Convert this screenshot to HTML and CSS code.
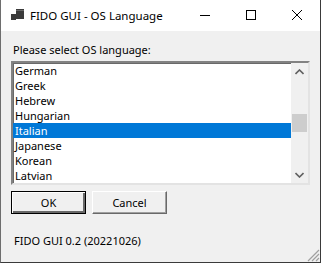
FILE: index.html
```html
<!DOCTYPE html>
<html>
<head>
    <title>FIDO GUI - OS Language</title>
    <link rel="stylesheet" href="styles.css">
</head>
<body>
    <div class="window">
        <div class="titlebar">
            <svg class="app-icon" width="13" height="13" viewBox="0 0 13 13">
                <rect x="0" y="5" width="5" height="6" fill="#3b3b3b"/>
                <rect x="5" y="0" width="8" height="10" fill="#3b3b3b"/>
                <rect x="5" y="1" width="8" height="1" fill="#6a6a6a"/>
            </svg>
            <span class="title">FIDO GUI - OS Language</span>
            <div class="controls">
                <svg class="ctl" width="46" height="30" viewBox="0 0 46 30"><rect x="18" y="15" width="10" height="1" fill="#000"/></svg>
                <svg class="ctl" width="46" height="30" viewBox="0 0 46 30"><rect x="18.5" y="10.5" width="9" height="9" fill="none" stroke="#000"/></svg>
                <svg class="ctl" width="46" height="30" viewBox="0 0 46 30"><path d="M18 10 L28 20 M28 10 L18 20" stroke="#000" stroke-width="1"/></svg>
            </div>
        </div>
        <div class="content">
            <div class="label">Please select OS language:</div>
            <div class="listbox">
                <ul class="items">
                    <li>German</li>
                    <li>Greek</li>
                    <li>Hebrew</li>
                    <li>Hungarian</li>
                    <li class="selected">Italian</li>
                    <li>Japanese</li>
                    <li>Korean</li>
                    <li>Latvian</li>
                </ul>
                <div class="scrollbar">
                    <div class="arrow">
                        <svg width="9" height="6" viewBox="0 0 9 6"><path d="M0.5 5 L4.5 1 L8.5 5" fill="none" stroke="#606060" stroke-width="1.6"/></svg>
                    </div>
                    <div class="track">
                        <div class="thumb"></div>
                    </div>
                    <div class="arrow">
                        <svg width="9" height="6" viewBox="0 0 9 6"><path d="M0.5 1 L4.5 5 L8.5 1" fill="none" stroke="#606060" stroke-width="1.6"/></svg>
                    </div>
                </div>
            </div>
            <div class="buttons">
                <div class="button default">OK</div>
                <div class="button">Cancel</div>
            </div>
            <div class="version">FIDO GUI 0.2 (20221026)</div>
        </div>
        <svg class="grip" width="13" height="13" viewBox="0 0 13 13">
            <path d="M12 1 L1 12 M12 5 L5 12 M12 9 L9 12" stroke="#a0a0a0" stroke-width="1.2"/>
        </svg>
    </div>
</body>
</html>
```

FILE: styles.css
```css
body { margin: 0; font-family: "Noto Sans", sans-serif; font-size: 11px; color: #000; }
.window { position: relative; width: 321px; height: 263px; box-sizing: border-box; background: #f0f0f0; border-left: 1px solid #6e6e6e; border-right: 1px solid #3a3a3a; border-bottom: 1px solid #3a3a3a; display: flex; flex-direction: column; overflow: hidden; }
.titlebar { height: 31px; background: #fff; display: flex; align-items: center; font-size: 11.5px; }
.app-icon { margin-left: 10px; margin-right: 6px; margin-top: -1px; }
.title { flex: 1; line-height: 16px; }
.controls { display: flex; align-self: flex-start; }
.ctl { display: block; }
.content { padding: 11px 0 0 10px; display: flex; flex-direction: column; }
.label { height: 19px; line-height: 15px; padding-left: 2px; }
.listbox { width: 295px; height: 120px; display: flex; border-style: solid; border-width: 2px; border-color: #828282 #e3e3e3 #e3e3e3 #828282; box-shadow: inset 1px 1px 0 #696969; background: #fff; }
.items { list-style: none; margin: 0; padding: 0; flex: 1; }
.items li { height: 15px; line-height: 15px; padding-left: 2px; }
.items .selected { background: #0078d7; color: #fff; }
.scrollbar { width: 17px; background: #f0f0f0; display: flex; flex-direction: column; }
.arrow { height: 17px; display: flex; align-items: center; justify-content: center; }
.track { flex: 1; padding-top: 34px; }
.thumb { height: 18px; margin: 0 1px; background: #cdcdcd; }
.buttons { display: flex; gap: 6px; margin-top: 6px; }
.button { width: 75px; height: 23px; box-sizing: border-box; display: flex; align-items: center; justify-content: center; background: #f0f0f0; border-style: solid; border-width: 1px; border-color: #fff #696969 #696969 #fff; box-shadow: inset -1px -1px 0 #a0a0a0; }
.button.default { border: 1px solid #000; box-shadow: inset 1px 1px 0 #fff, inset -2px -2px 0 #696969, inset -1px -1px 0 #a0a0a0; }
.version { margin-top: 19px; padding-left: 3px; line-height: 16px; }
.grip { position: absolute; right: 0; bottom: 0; }
```
